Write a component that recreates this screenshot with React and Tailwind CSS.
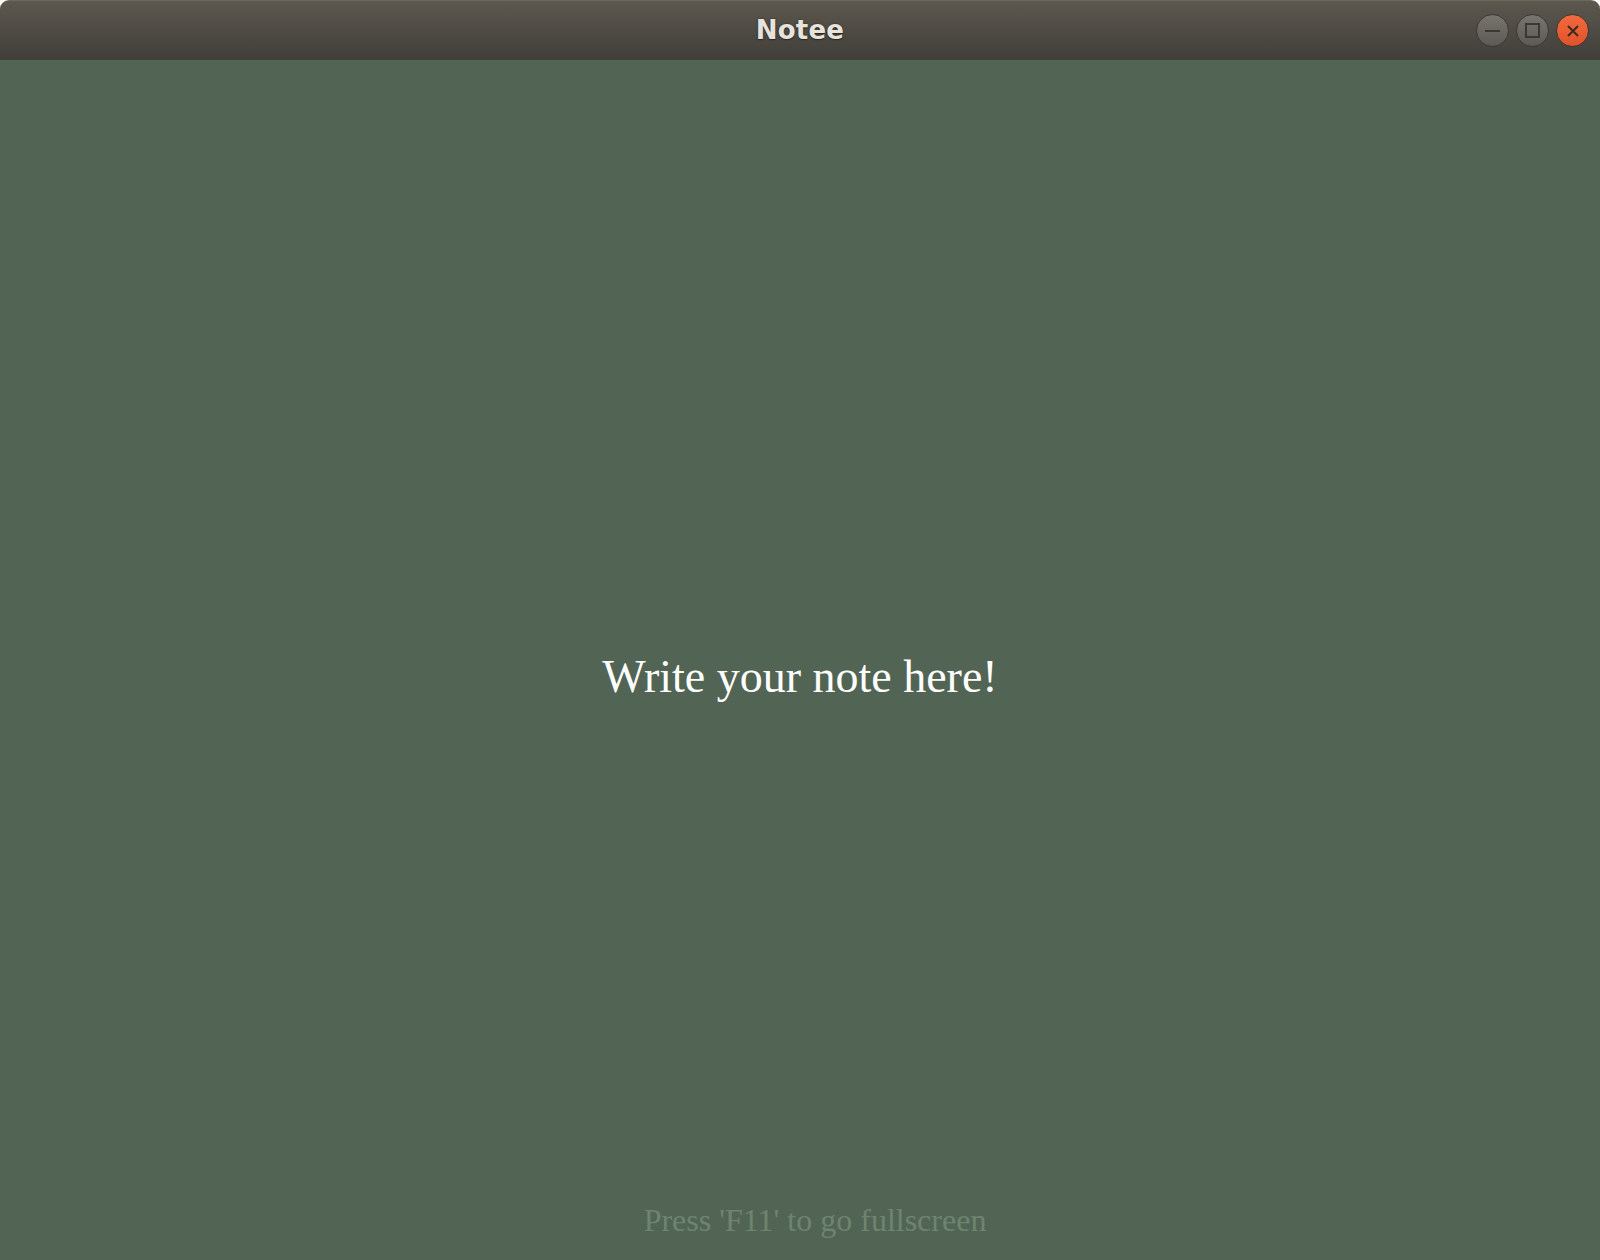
export default function App() {
  return (
    <div className="w-[1600px] h-[1260px] bg-white flex flex-col overflow-hidden">
      <div className="h-[60px] shrink-0 rounded-t-[9px] bg-gradient-to-b from-[#5c584f] to-[#413e39] border-t border-[#6b6759] relative flex items-center justify-center">
        <span
          className="text-[26px] font-bold text-[#e6e2dc] tracking-[0.2px]"
          style={{ fontFamily: '"DejaVu Sans", sans-serif', textShadow: '0 0 2px #2a2824, 0 1px 1px #2a2824' }}
        >
          Notee
        </span>
        <div className="absolute right-[11px] top-[13px] flex gap-[7px]">
          <div className="w-[33px] h-[33px] rounded-full bg-gradient-to-b from-[#78756e] to-[#5d5a54] border border-[#3a3833] flex items-center justify-center">
            <div className="w-[15px] h-[2px] bg-[#3a3833]" />
          </div>
          <div className="w-[33px] h-[33px] rounded-full bg-gradient-to-b from-[#78756e] to-[#5d5a54] border border-[#3a3833] flex items-center justify-center">
            <div className="w-[15px] h-[15px] border-2 border-[#3a3833]" />
          </div>
          <div className="w-[33px] h-[33px] rounded-full bg-gradient-to-b from-[#f26a3d] to-[#e0522a] border border-[#3a3833] flex items-center justify-center">
            <svg width="14" height="14" viewBox="0 0 14 14">
              <path d="M2 2 L12 12 M12 2 L2 12" stroke="#3a2a20" strokeWidth="2" />
            </svg>
          </div>
        </div>
      </div>
      <div className="flex-1 bg-[#526555] flex flex-col items-center">
        <div className="flex-1 flex items-center justify-center pt-[96px]">
          <span className="text-[46px] text-white" style={{ fontFamily: '"Liberation Serif", serif' }}>
            Write your note here!
          </span>
        </div>
        <div className="pb-[16px] pl-[30px]">
          <span className="text-[32px] text-[#6f8470]" style={{ fontFamily: '"Liberation Serif", serif' }}>
            Press 'F11' to go fullscreen
          </span>
        </div>
      </div>
    </div>
  );
}
